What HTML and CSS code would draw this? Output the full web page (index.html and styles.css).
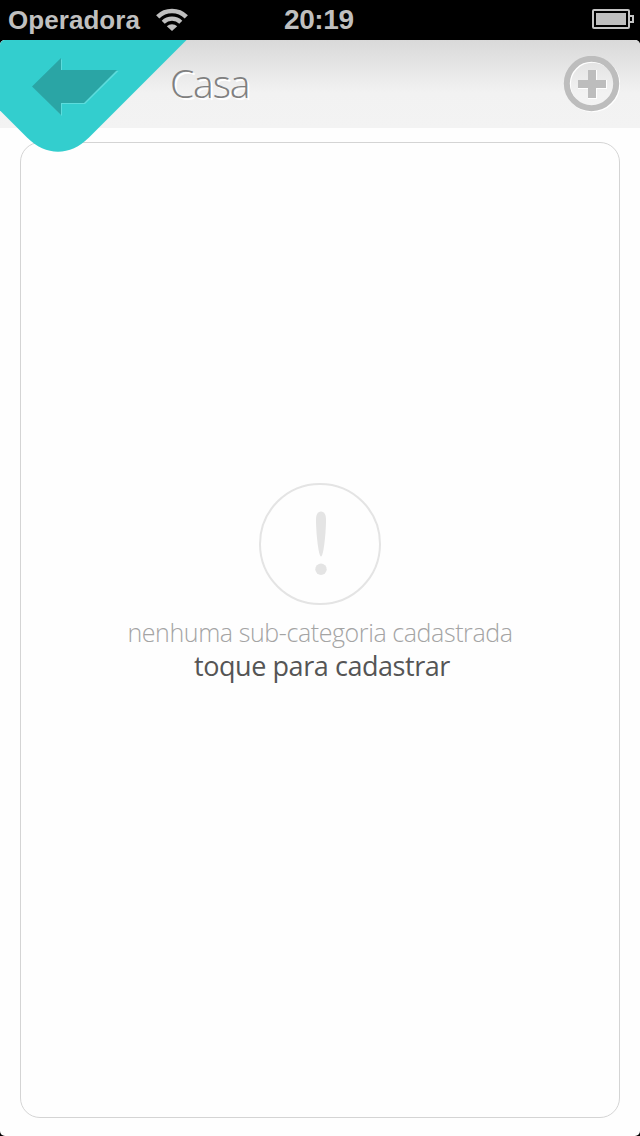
FILE: index.html
```html
<!DOCTYPE html>
<html lang="pt-BR">
<head>
<meta charset="utf-8">
<title>Casa</title>
<link rel="stylesheet" href="styles.css">
</head>
<body>
<div class="status">
  <div class="status-left">
    <span class="carrier">Operadora</span>
    <svg class="wifi" width="32" height="24" viewBox="0 0 32 24" fill="none" stroke="#bfbfbf">
      <path d="M1.7 8.8a20.5 20.5 0 0 1 28.6 0" stroke-width="4.6"/>
      <path d="M7.2 14.2a12.6 12.6 0 0 1 17.6 0" stroke-width="4.4"/>
      <path d="M16 23l-5.2-4.800a7.700 7.700 0 0 1 10.400 0z" fill="#bfbfbf" stroke="none"/>
    </svg>
  </div>
  <span class="clock">20:19</span>
  <svg class="battery" width="42" height="20" viewBox="0 0 42 20">
    <rect x="1" y="1" width="36" height="18" rx="1" fill="none" stroke="#c4c4c4" stroke-width="2"/>
    <rect x="4" y="4" width="30" height="12" fill="#bfbfbf"/>
    <path d="M38 7h3v6h-3" fill="none" stroke="#c4c4c4" stroke-width="2"/>
  </svg>
</div>
<div class="app">
  <header class="header">
    <svg class="back" width="188" height="113" viewBox="0 0 188 113">
      <path d="M0 0H186.500L89 97.500C70 116.500 46 116.500 27 97.500L0 70.500Z" fill="#33cece"/>
      <path d="M33.500 47.500L62 19V31H118.500L85 64H62V76Z" fill="#5cdcdc"/>
      <path d="M32 46.500L61 18V30H117L84 63H61V75Z" fill="#2aa5a5"/>
    </svg>
    <h1 class="title">Casa</h1>
    <svg class="add" width="57" height="57" viewBox="0 0 57 57">
      <circle cx="29.500" cy="28.500" r="24.700" fill="none" stroke="#fff" stroke-width="6"/>
      <circle cx="28.500" cy="27.500" r="24.700" fill="none" stroke="#bdbdbd" stroke-width="6"/>
      <path d="M25 14h9v10h10v9H34v10h-9V33H15v-9h10z" fill="#fff"/>
      <path d="M25 14h8v10h10v8H33v10h-8V32H15v-8h10z" fill="#bdbdbd"/>
    </svg>
  </header>
  <main class="content">
    <section class="panel">
      <svg class="alert" width="122" height="122" viewBox="0 0 122 122" fill="#e4e4e4">
        <circle cx="61" cy="61" r="60" fill="none" stroke="#e4e4e4" stroke-width="2"/>
        <path d="M62 28.500c3.600 0 5 3.500 5 8.500 0 13-2.500 36.500-5 36.500S57 50 57 37c0-5 1.400-8.500 5-8.500z"/>
        <circle cx="62" cy="86.300" r="5.700"/>
      </svg>
      <p class="empty">nenhuma sub-categoria cadastrada</p>
      <p class="action">toque para cadastrar</p>
    </section>
  </main>
</div>
</body>
</html>
```
FILE: styles.css
```css
* { box-sizing: border-box; }
body {
  margin: 0;
  height: 1136px;
  display: flex;
  flex-direction: column;
  background: #000;
  overflow: hidden;
  font-family: "Open Sans", "Noto Sans", sans-serif;
}
.status {
  flex: none;
  height: 40px;
  display: grid;
  grid-template-columns: 284px 1fr auto;
  align-items: center;
  padding-right: 6px;
  color: #bfbfbf;
  font: bold 26px/40px "Liberation Sans", sans-serif;
}
.status-left { display: flex; align-items: center; padding-left: 8px; }
.carrier { width: 148px; letter-spacing: 0.05px; }
.wifi { display: block; margin-top: -1px; }
.clock { font-size: 28px; letter-spacing: -0.4px; }
.battery { display: block; margin-top: -2px; }
.app {
  flex: 1;
  display: flex;
  flex-direction: column;
  background: #fefefe;
  border-radius: 5px;
  overflow: hidden;
}
.header {
  position: relative;
  flex: none;
  height: 88px;
  display: flex;
  align-items: center;
  justify-content: space-between;
  padding: 0 20px 0 170px;
  background: linear-gradient(#d9d9d9, #f2f2f2 60%, #f3f3f3);
}
.back { position: absolute; left: 0; top: 0; z-index: 1; }
.title {
  margin: 0;
  padding-bottom: 3px;
  font-size: 39px;
  font-weight: 300;
  line-height: 85px;
  letter-spacing: -1.1px;
  color: #808080;
  text-shadow: 2px 2px 0 #fff;
}
.add { display: block; }
.content { flex: 1; display: flex; padding: 14px 20px 18px; }
.panel {
  flex: 1;
  display: flex;
  flex-direction: column;
  align-items: center;
  padding-top: 340px;
  border: 1px solid #d4d4d4;
  border-radius: 20px;
}
.alert { display: block; flex: none; }
.empty, .action { margin: 0; white-space: nowrap; }
.empty {
  margin-top: 10px;
  font-size: 25px;
  font-weight: 300;
  line-height: 34px;
  letter-spacing: -0.41px;
  color: #a4a4a4;
}
.action {
  padding-left: 4px;
  font-size: 27px;
  line-height: 34px;
  letter-spacing: -0.44px;
  color: #555;
}
```
